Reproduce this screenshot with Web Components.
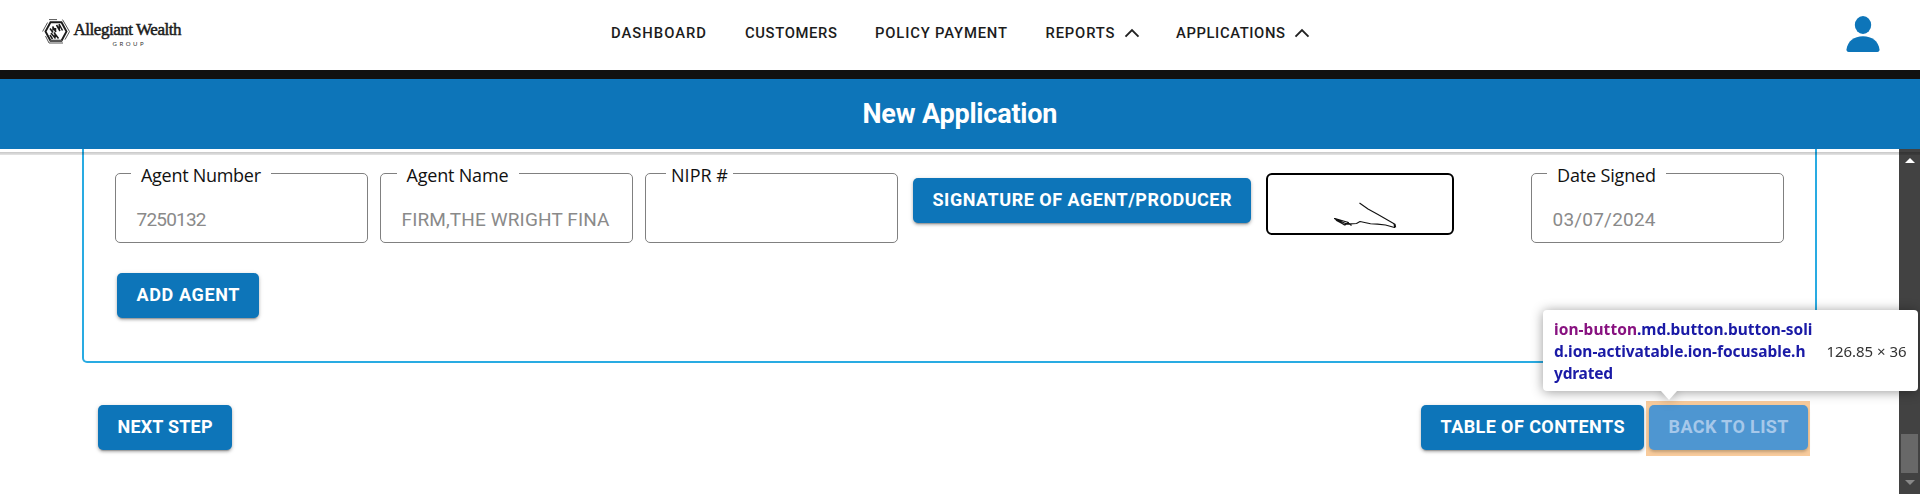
<!DOCTYPE html>
<html lang="en"><head><meta charset="utf-8"><title>New Application</title>
<style>html,body{margin:0;height:100%;overflow:hidden;background:#fff}</style></head>
<body><agent-page></agent-page>
<script>
const make=(name,html,setup)=>customElements.define(name,class extends HTMLElement{
  connectedCallback(){if(this.shadowRoot)return;const t=document.createElement('template');t.innerHTML=html;
    this.attachShadow({mode:'open'}).append(t.content.cloneNode(true));if(setup)setup(this,this.shadowRoot);}
});

/* Tracks its text so that the run spans a given width. */
make('fit-text',`<style>:host{display:inline-block;white-space:pre;flex:none}span{display:inline-block}</style><span></span>`,(h,r)=>{
  const s=r.querySelector('span'),t=h.getAttribute('text')||'',w=+h.getAttribute('w');s.textContent=t;
  const n=s.getBoundingClientRect().width,ls=(w-n)/Math.max(1,t.length-1);
  s.style.letterSpacing=ls+'px';s.style.marginRight=-ls+'px';
});

make('brand-logo',`<style>:host{display:flex;width:145px;margin-left:42px;padding-top:18px;height:52px;box-sizing:border-box;color:#1b1b1b}
svg{flex:none;margin-top:1px}.w{margin-left:3.500px;display:flex;flex-direction:column}
.a{font:400 17px/23px "Liberation Serif",serif;-webkit-text-stroke:.5px #1b1b1b}.g{font:6px/8px Lato,sans-serif;color:#333;margin-left:39px;margin-top:-1px}</style>
<svg width="28" height="25" viewBox="0 0 28 25" fill="none" stroke="#1b1b1b">
<path d="M8.500 3.200h11l5 9.300-5 9.300h-11l-5-9.300z" stroke-width="1.900"/>
<path d="M7 .6h8M20.500 .6l7 12-4.500 8M.6 12.500l5-9M3.500 17l3.500 7h14M8 21.500h13" stroke-width="1" stroke="#555"/>
<path d="M8 9.500l3 4M10.500 7.500l3.500 5.500M11 7.500v4M13.500 9v4M14.500 6l3.500 6M17 5l3.500 6.500M17.300 6v5M9 14l4.500 5.500M12 13.500l4.500 6M13 14.500v4.500M8 16l2.500 4" stroke-width="1.500"/></svg>
<div class="w"><fit-text class="a" text="Allegiant Wealth" w="108"></fit-text><fit-text class="g" text="GROUP" w="31"></fit-text></div>`);

make('nav-item',`<style>:host{display:flex;align-items:center;color:#1c1c1c;font:500 14.800px/20px Roboto,sans-serif}svg{margin-left:9px}:host(:not([menu])) svg{display:none}</style>
<svg width="16" height="10" viewBox="0 0 16 10" fill="none" stroke="#222" stroke-width="1.900"><path d="M1.500 8.700 8 2l6.500 6.700"/></svg>`,(h,r)=>{
  const g=document.createElement('fit-text');g.setAttribute('text',h.getAttribute('text'));g.setAttribute('w',h.getAttribute('w'));r.insertBefore(g,r.querySelector('svg'));
});

make('top-bar',`<style>:host{display:grid;grid-template-columns:611px 1fr 75px;height:70px;background:#fff;border-bottom:9px solid #111}
nav{display:grid;grid-template-columns:134px 130px 170.500px 130.500px auto;height:20px;margin-top:23px}
.u{margin-top:16px}</style>
<brand-logo></brand-logo><nav><nav-item text="DASHBOARD" w="95"></nav-item><nav-item text="CUSTOMERS" w="92"></nav-item><nav-item text="POLICY PAYMENT" w="132"></nav-item><nav-item menu text="REPORTS" w="69"></nav-item><nav-item menu text="APPLICATIONS" w="109"></nav-item></nav>
<svg class="u" width="36" height="38" viewBox="0 0 36 38" fill="#0d75b9"><ellipse cx="18" cy="9" rx="8.200" ry="9"/><path d="M1.500 33.500C2.500 25 9 20.200 18 20.200s15.500 4.800 16.500 13.300c.1 1.600-.7 2.500-2.200 2.500H3.700c-1.500 0-2.300-.9-2.200-2.500z"/></svg>`);

make('title-bar',`<style>:host{display:flex;justify-content:center;height:70px;background:#0d75b9;color:#fff;font:700 27px/71px Roboto,sans-serif}</style><fit-text text="New Application" w="195"></fit-text>`);

make('form-field',`<style>:host{display:block;position:relative;box-sizing:border-box;width:253px;height:70px;border:1px solid #808080;border-radius:5px;padding:30px 20px 0 20.500px}
.l{position:absolute;background:#fff;top:-12px;height:26px;color:#111;font:400 18px/26px "Open Sans",sans-serif;box-sizing:border-box;white-space:nowrap}
.v{color:#8a8a8a;font:400 19px/32px Roboto,sans-serif;height:34px;white-space:nowrap}.v fit-text{margin-top:-.5px}</style><div class="l"></div><div class="v"></div>`,(h,r)=>{
  const a=k=>h.getAttribute(k),[x,gap,pad]=a('notch').split(' ');
  const l=r.querySelector('.l');l.style.cssText=`left:${x}px;width:${gap}px;padding-left:${pad}px`;
  l.innerHTML=`<fit-text text="${a('label')}" w="${a('lw')}"></fit-text>`;
  if(a('value'))r.querySelector('.v').innerHTML=`<fit-text text="${a('value')}" w="${a('vw')}"></fit-text>`;
});

make('solid-button',`<style>:host{display:flex;align-items:center;justify-content:center;height:45px;box-sizing:border-box;padding-bottom:2px;border-radius:5px;background:#0d75b9;color:#fff;font:700 18px/43px Roboto,sans-serif;box-shadow:0 3px 1px -2px rgba(0,0,0,.2),0 2px 3px rgba(0,0,0,.2),0 1px 5px rgba(0,0,0,.14);flex:none}
:host([picked]){background:#4e96d1;color:#a6c8ea;box-shadow:0 2px 3px rgba(100,80,50,.35)}</style>`,(h,r)=>{
  h.style.width=h.getAttribute('width')+'px';const f=document.createElement('fit-text');f.setAttribute('text',h.getAttribute('text'));f.setAttribute('w',h.getAttribute('w'));r.append(f);
});

make('signature-box',`<style>:host{display:block;box-sizing:border-box;width:188px;height:62px;border:2px solid #000;border-radius:6px}svg{display:block}</style>
<svg width="184" height="58" viewBox="1268 175 184 58" fill="none" stroke="#111" stroke-width="1.100" stroke-linejoin="round"><path d="M1359.500 203l8.500 6 10 5.500 16.500 9.500v3.500l-9-2.500-8-.9-7-.3-10.500-2.300-3.500 2-10 .6-12-5.600 10 6.500 4-2.500-13.500-4 1.500 2 8.500 4.500 2-1.500M1347 222l4.500 3.500"/><path d="M1394.500 224l.7 3.500" stroke-width="2"/></svg>`);

make('inspect-tip',`<style>:host{display:flex;align-items:center;box-sizing:border-box;width:375px;height:81px;background:#fff;border-radius:4px;padding-left:11px;filter:drop-shadow(0 1px 6px rgba(0,0,0,.4));color:#1a1aa6;font:700 15.500px/22px "Noto Sans",sans-serif}
.s{width:272.500px;display:flex;flex-direction:column;align-items:flex-start}.t{color:#881280}.d{font-weight:400;color:#333;font-size:15px}.r{display:flex}
i{position:absolute;left:118px;top:81px;border:8.500px solid transparent;border-top:9px solid #fff;border-bottom:0}</style>
<div class="s"><div class="r"><fit-text class="t" text="ion-button" w="83"></fit-text><fit-text text=".md.button.button-soli" w="175.500"></fit-text></div><fit-text text="d.ion-activatable.ion-focusable.h" w="251.500"></fit-text><fit-text text="ydrated" w="59"></fit-text></div><fit-text class="d" text="126.85 × 36" w="80"></fit-text><i></i>`);

make('scroll-bar',`<style>:host{display:flex;flex-direction:column;align-items:center;background:#424242;width:21px;height:345px}
.u{margin-top:9px;border:5px solid transparent;border-top:0;border-bottom:5px solid #fff}.d{margin-top:7px;border:5px solid transparent;border-bottom:0;border-top:5px solid #888}
.t{margin-top:271px;width:17px;height:39px;background:#686868}</style><div class="u"></div><div class="t"></div><div class="d"></div>`);

make('agent-page',`<style>:host{display:block;height:494px;overflow:hidden}
main{display:flex;height:345px;position:relative}.c{width:1899px}
.card{box-sizing:border-box;width:1735px;height:214px;margin-left:82px;border:2px solid #29abe2;border-top:0;border-radius:0 0 5px 5px;padding:24px 31px 0}
.row{display:flex;align-items:flex-start}.row>*{flex:none}
.foot{display:flex;margin:38px 89px 0 98px;height:55px}.foot>solid-button{margin-top:4px}.ring{box-sizing:border-box;width:164px;height:55px;background:#f8cb9c;padding:4px 2px 6px 3px;margin-left:2px}
.shade{position:absolute;left:0;right:0;top:3px;height:3px;background:linear-gradient(rgba(0,0,0,.22),rgba(0,0,0,.1))}
inspect-tip{position:absolute;left:1543px;top:161px}</style>
<top-bar></top-bar><title-bar></title-bar>
<main><div class="c"><section class="card"><div class="row">
<form-field label="Agent Number" lw="120" notch="15 140 10" value="7250132" vw="70"></form-field>
<form-field style="margin-left:12px" label="Agent Name" lw="102" notch="15.500 122 10" value="FIRM,THE WRIGHT FINA" vw="208"></form-field>
<form-field style="margin-left:12px" label="NIPR #" lw="57" notch="20 67 5"></form-field>
<solid-button style="margin:5px 15px 0" text="SIGNATURE OF AGENT/PRODUCER" width="338" w="299"></solid-button>
<signature-box></signature-box>
<form-field style="margin-left:77px" label="Date Signed" lw="99" notch="15 119 10" value="03/07/2024" vw="103"></form-field></div>
<solid-button style="margin:30px 0 0 2px" text="ADD AGENT" width="142" w="103"></solid-button></section>
<div class="foot"><solid-button text="NEXT STEP" width="134" w="95"></solid-button>
<solid-button style="margin-left:auto" text="TABLE OF CONTENTS" width="223" w="184"></solid-button><div class="ring"><solid-button picked text="BACK TO LIST" width="159" w="120"></solid-button></div></div></div>
<scroll-bar></scroll-bar><div class="shade"></div><inspect-tip></inspect-tip></main>`);
</script></body></html>
